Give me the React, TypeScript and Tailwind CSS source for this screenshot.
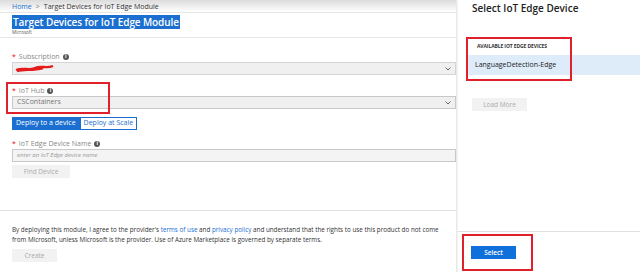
import React from "react";

function Info() {
  return (
    <span className="ml-[3px] inline-flex h-[6px] w-[6px] items-center justify-center rounded-full bg-[#555] text-[5px] font-bold leading-none text-white">i</span>
  );
}

function Label({ text }: { text: string }) {
  return (
    <div className="flex items-center text-[7px] leading-[9px] text-[#888]">
      <span className="mr-[3px] text-[#e00]">*</span>
      {text}
      <Info />
    </div>
  );
}

function Chevron() {
  return (
    <svg width="6" height="4" viewBox="0 0 6 4" className="mr-[4px]">
      <path d="M0.5 0.5 L3 3 L5.5 0.5" fill="none" stroke="#555" strokeWidth="0.9" />
    </svg>
  );
}

export default function App() {
  return (
    <div className="relative flex h-[272px] w-[640px] overflow-hidden bg-white font-['Open_Sans',sans-serif]">
      <div className="flex w-[456px] shrink-0 flex-col">
        <div className="flex h-[13px] items-center border-b border-[#e6e6e6] bg-gradient-to-b from-[#dcdcdc] to-white pl-[12px] text-[7px] leading-[9px] text-[#333]">
          <span className="text-[#1a6fd1]">Home</span>
          <span className="mx-[4px] text-[#777]">&gt;</span>
          <span>Target Devices for IoT Edge Module</span>
        </div>
        <div className="flex h-[25px] flex-col items-start border-b border-[#e6e6e6] pl-[12px] pt-[2px]">
          <div className="bg-[#1a6fd1] px-[1px] text-[10px] font-semibold leading-[14px] tracking-[-0.1px] text-white">Target Devices for IoT Edge Module</div>
          <div className="text-[4.5px] leading-[6px] text-[#555]">Microsoft</div>
        </div>
        <div className="flex flex-col pl-[12px] pt-[14px]">
          <Label text="Subscription" />
          <div className="mt-[1px] flex h-[13px] items-center justify-between border border-[#d4d4d4] bg-[#f0f0f0]">
            <svg width="40" height="9" viewBox="0 0 40 9" className="ml-[2px]">
              <path d="M1 6 C8 3 14 7 20 4 C26 1 31 5 38 2 M2 7 C10 5 18 7 28 4" fill="none" stroke="#e31b1b" strokeWidth="2.4" />
            </svg>
            <Chevron />
          </div>
          <div className="mt-[11px]">
            <Label text="IoT Hub" />
          </div>
          <div className="mt-[1px] flex h-[13px] items-center justify-between border border-[#c8c8c8] bg-[#f0f0f0] pl-[4px] text-[7px] text-[#777]">
            CSContainers
            <Chevron />
          </div>
          <div className="mt-[8px] flex h-[13px] text-[7px]">
            <div className="flex items-center bg-[#1a6fd1] px-[4px] text-white">Deploy to a device</div>
            <div className="flex items-center border border-[#1a6fd1] px-[3px] text-[#1a6fd1]">Deploy at Scale</div>
          </div>
          <div className="mt-[9px]">
            <Label text="IoT Edge Device Name" />
          </div>
          <div className="mt-[1px] flex h-[13px] items-center border border-[#c8c8c8] bg-[#f4f4f4] pl-[4px] text-[6px] italic text-[#999]">
            enter an IoT Edge device name
          </div>
          <div className="mt-[3px] flex h-[13px] w-[58px] items-center justify-center bg-[#f2f2f2] text-[6.5px] text-[#aaa]">Find Device</div>
        </div>
        <div className="mt-[32px] border-t border-[#e0e0e0] pl-[12px] pt-[14px]">
          <p className="w-[436px] text-[6.3px] leading-[10px] text-[#333]">
            By deploying this module, I agree to the provider's <span className="text-[#1a6fd1]">terms of use</span> and <span className="text-[#1a6fd1]">privacy policy</span> and understand that the rights to use this product do not come from Microsoft, unless Microsoft is the provider. Use of Azure Marketplace is governed by separate terms.
          </p>
          <div className="mt-[4px] flex h-[13px] w-[45px] items-center justify-center bg-[#f2f2f2] text-[6.5px] text-[#aaa]">Create</div>
        </div>
      </div>
      <div className="w-[2px] shrink-0 bg-gradient-to-r from-[#e4e4e4] to-[#f7f7f7]" />
      <div className="flex flex-1 flex-col">
        <div className="pl-[14px] pt-[1px] text-[10px] font-semibold leading-[14px] text-[#222]">Select IoT Edge Device</div>
        <div className="pl-[19px] pt-[27px] text-[5px] font-bold uppercase leading-[8px] tracking-[-0.1px] text-[#333]">Available IoT Edge Devices</div>
        <div className="ml-[8px] mt-[5px] flex h-[20px] items-center bg-[#deecf9] pl-[9px] text-[7px] text-[#222]">LanguageDetection-Edge</div>
        <div className="ml-[14px] mt-[23px] flex h-[13px] w-[55px] items-center justify-center bg-[#f2f2f2] text-[6.5px] text-[#aaa]">Load More</div>
        <div className="mt-auto h-[41px] border-t border-[#e0e0e0] pl-[13px] pt-[14px]">
          <div className="flex h-[13px] w-[45px] items-center justify-center bg-[#0f6fdb] text-[6.5px] font-semibold text-white">Select</div>
        </div>
      </div>
      <div className="absolute left-[6px] top-[82px] h-[32px] w-[104px] border-2 border-[#e0202a]" />
      <div className="absolute left-[466px] top-[37px] h-[44px] w-[106px] border-2 border-[#e0202a]" />
      <div className="absolute left-[462px] top-[234px] h-[37px] w-[71px] border-2 border-[#e0202a]" />
    </div>
  );
}
